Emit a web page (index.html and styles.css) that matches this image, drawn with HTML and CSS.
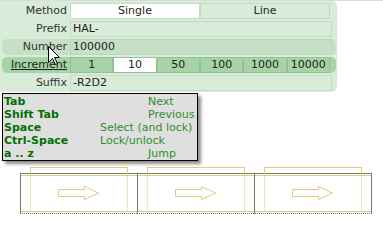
FILE: index.html
```html
<!DOCTYPE html>
<html>
<head>
<meta charset="utf-8">
<link rel="stylesheet" href="styles.css">
</head>
<body>
<div class="page">
  <div class="panel">
    <div class="row">
      <span class="lbl">Method</span>
      <div class="cells"><span class="cell sel">Single</span><span class="cell">Line</span></div>
    </div>
    <div class="row">
      <span class="lbl">Prefix</span>
      <div class="cells wide"><span class="cell val">HAL-</span></div>
    </div>
    <div class="row hover">
      <span class="lbl">Number</span>
      <div class="cells wide"><span class="cell val">100000</span></div>
    </div>
    <div class="row active">
      <span class="lbl u">Increment</span>
      <div class="cells"><span class="cell">1</span><span class="cell sel">10</span><span class="cell">50</span><span class="cell">100</span><span class="cell">1000</span><span class="cell">10000</span></div>
    </div>
    <div class="row">
      <span class="lbl">Suffix</span>
      <div class="cells wide"><span class="cell val">-R2D2</span></div>
    </div>
    <svg class="cursor" width="13" height="20" viewBox="0 0 13 20"><path d="M0.5 0.5 L0.5 16.5 L4.5 12.5 L7.5 18.5 L9.5 17.5 L6.5 11.5 L11.5 11.5 Z" fill="#fff" stroke="#000" stroke-width="1"/></svg>
  </div>
  <div class="tip">
    <b>Tab</b><span class="ind">Next</span>
    <b>Shift Tab</b><span class="ind">Previous</span>
    <b>Space</b><span>Select (and lock)</span>
    <b>Ctrl-Space</b><span>Lock/unlock</span>
    <b>a .. z</b><span class="ind">Jump</span>
  </div>
  <div class="strip">
    <div class="sec"><div class="ybox"></div><div class="band"><svg class="arrow" width="42" height="15" viewBox="0 0 42 15"><path d="M0.5 3.5 H26.5 V0.5 L40.5 7 L26.5 13.5 V10.5 H0.5 Z" fill="none" stroke="#e2ca7e" stroke-width="1"/></svg></div></div>
    <div class="sec"><div class="ybox"></div><div class="band"><svg class="arrow" width="42" height="15" viewBox="0 0 42 15"><path d="M0.5 3.5 H26.5 V0.5 L40.5 7 L26.5 13.5 V10.5 H0.5 Z" fill="none" stroke="#e2ca7e" stroke-width="1"/></svg></div></div>
    <div class="sec last"><div class="ybox"></div><div class="band"><svg class="arrow" width="42" height="15" viewBox="0 0 42 15"><path d="M0.5 3.5 H26.5 V0.5 L40.5 7 L26.5 13.5 V10.5 H0.5 Z" fill="none" stroke="#e2ca7e" stroke-width="1"/></svg></div></div>
  </div>
</div>
</body>
</html>
```
FILE: styles.css
```css
html, body {
  margin: 0;
  padding: 0;
  background: #ffffff;
}
.page {
  width: 383px;
  height: 222px;
  border-top: 1px solid #dcdcdc;
  box-sizing: border-box;
  font-family: "DejaVu Sans", Verdana, sans-serif;
  font-size: 11px;
  overflow: hidden;
}
.panel {
  position: relative;
  width: 337px;
  box-sizing: border-box;
  background: #d9ecd9;
  border-radius: 0 5px 5px 0;
  padding: 2px 0 1px 0;
  display: flex;
  flex-direction: column;
  gap: 2px;
}
.row {
  margin-left: 2px;
  width: 334px;
  height: 16px;
  display: flex;
  align-items: stretch;
  border-radius: 5px;
}
.row.hover { background: #c6e0c6; }
.row.active { background: #a7d4a7; }
.lbl {
  width: 68px;
  box-sizing: border-box;
  padding-right: 3px;
  text-align: right;
  color: #333333;
  line-height: 16px;
}
.lbl.u { text-decoration: underline; color: #222222; }
.cells {
  width: 260px;
  display: flex;
}
.cells.wide { width: 262px; }
.cell {
  flex: 1 1 0;
  box-sizing: border-box;
  border: 1px solid #c3dcc3;
  text-align: center;
  line-height: 14px;
  color: #222222;
}
.cell.val { text-align: left; padding-left: 2px; }
.row.hover .cell { border-color: #b9d6b9; }
.row.active .cell { border-color: #90c490; background: #a7d4a7; }
.cell.sel, .row.active .cell.sel { background: #ffffff; }
.cursor {
  position: absolute;
  left: 48px;
  top: 45px;
}
.tip {
  margin-top: 1px;
  margin-left: 2px;
  width: 196px;
  height: 68px;
  box-sizing: border-box;
  border: 1px solid #000000;
  background: #dfdfdf;
  box-shadow: 3px 3px 3px rgba(0,0,0,0.45);
  padding: 1px 0 0 1px;
  display: grid;
  grid-template-columns: 96px 1fr;
  line-height: 13px;
  white-space: nowrap;
}
.tip b { color: #007000; }
.tip span { color: #2b8f2b; }
.tip .ind { padding-left: 48px; }
.strip {
  margin: 6px 0 0 20px;
  padding-top: 6px;
  display: flex;
  width: 352px;
}
.sec {
  position: relative;
  width: 117px;
  height: 41px;
  box-sizing: border-box;
  border-top: 1px solid #6e7f6e;
  border-left: 1px solid #6e7f6e;
  border-bottom: 1px dotted #6e7f6e;
  padding-top: 1px;
  padding-bottom: 1px;
}
.sec.last {
  width: 118px;
  border-right: 1px solid #6e7f6e;
}
.band {
  height: 37px;
  box-sizing: border-box;
  border-top: 1px solid #e2ca7e;
  border-bottom: 1px solid #e2ca7e;
  display: flex;
  align-items: center;
  justify-content: center;
}
.ybox {
  position: absolute;
  left: 9px;
  top: -7px;
  width: 98px;
  height: 45px;
  box-sizing: border-box;
  border-left: 1px dotted #e2ca7e;
  border-right: 1px dotted #e2ca7e;
}
.ybox::before {
  content: "";
  display: block;
  height: 8px;
  margin: 0 -1px;
  border: 1px solid #e2ca7e;
  border-bottom: none;
}
.arrow { display: block; }
```
